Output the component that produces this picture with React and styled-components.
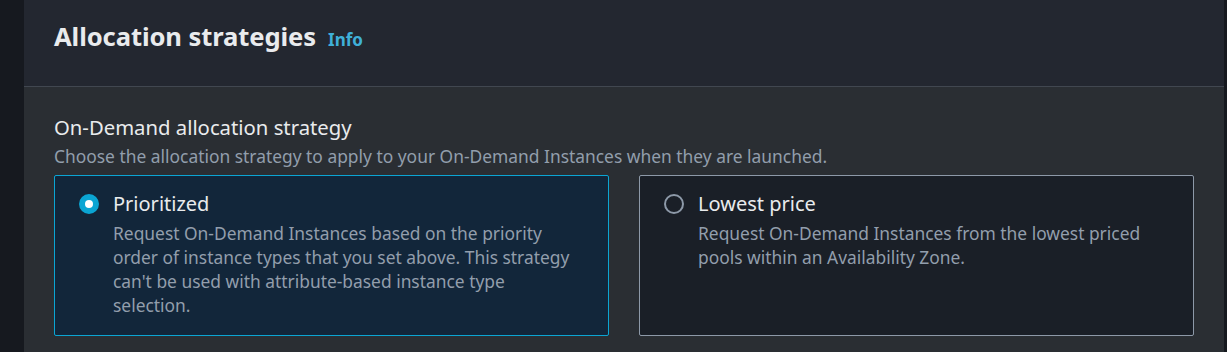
import React, { useState } from 'react'
import styled, { createGlobalStyle } from 'styled-components'

const Global = createGlobalStyle`
  html, body {
    margin: 0;
    background: #16191f;
  }
  body {
    font-family: "Noto Sans", "Open Sans", sans-serif;
    -webkit-font-smoothing: antialiased;
  }
`

const Page = styled.div`
  display: flex;
  min-height: 352px;
  background: #16191f;
  padding: 0 3px 0 24px;
  box-sizing: border-box;
`

const Container = styled.section`
  flex: 1;
  display: flex;
  flex-direction: column;
  background: #2a2e33;
`

const Header = styled.header`
  display: flex;
  align-items: baseline;
  gap: 12px;
  height: 87px;
  box-sizing: border-box;
  padding: 20px 30px 0;
  background: #232730;
  border-bottom: 1px solid #414750;

  h2 {
    margin: 0;
    font-size: 25.6px;
    line-height: 34px;
    font-weight: 700;
    color: #e9ebed;
    letter-spacing: -0.1px;
  }

  a {
    font-size: 17px;
    font-weight: 700;
    color: #3fb0d8;
    text-decoration: none;
  }
`

const Body = styled.div`
  padding: 27px 30px 17px;
`

const Label = styled.div`
  font-size: 20.3px;
  line-height: 26px;
  color: #e9ebed;
`

const Hint = styled.div`
  font-size: 17.4px;
  line-height: 22px;
  color: #929eac;
  margin-top: 5px;
`

const Tiles = styled.div`
  display: grid;
  grid-template-columns: 555px 555px;
  gap: 30px;
  margin-top: 8px;
`

const Tile = styled.label`
  display: flex;
  gap: 14px;
  padding: 16px 24px 18px;
  border-radius: 2px;
  cursor: pointer;
  background: ${p => (p.$selected ? '#12263a' : '#1a1f27')};
  border: 1px solid ${p => (p.$selected ? '#0ba5d3' : '#8d99a8')};
`

const Radio = styled.span`
  flex: none;
  width: 20px;
  height: 20px;
  margin-top: 2px;
  border-radius: 50%;
  box-sizing: border-box;
  display: flex;
  align-items: center;
  justify-content: center;
  background: ${p => (p.$checked ? '#0ba5d3' : 'transparent')};
  border: 2px solid ${p => (p.$checked ? '#0ba5d3' : '#8d99a8')};

  &::after {
    content: '';
    width: 8px;
    height: 8px;
    border-radius: 50%;
    background: #ffffff;
    display: ${p => (p.$checked ? 'block' : 'none')};
  }
`

const TileText = styled.div`
  display: flex;
  flex-direction: column;
`

const TileTitle = styled.span`
  font-size: 20px;
  line-height: 24px;
  color: #e9ebed;
`

const TileDesc = styled.span`
  margin-top: 5px;
  font-size: 17.4px;
  line-height: 24px;
  color: #929eac;
`

const options = [
  {
    id: 'prioritized',
    title: 'Prioritized',
    desc: "Request On-Demand Instances based on the priority order of instance types that you set above. This strategy can't be used with attribute-based instance type selection.",
  },
  {
    id: 'lowest',
    title: 'Lowest price',
    desc: 'Request On-Demand Instances from the lowest priced pools within an Availability Zone.',
  },
]

export default function App() {
  const [value, setValue] = useState('prioritized')
  return (
    <>
      <Global />
      <Page>
        <Container>
          <Header>
            <h2>Allocation strategies</h2>
            <a href="#">Info</a>
          </Header>
          <Body>
            <Label>On-Demand allocation strategy</Label>
            <Hint>Choose the allocation strategy to apply to your On-Demand Instances when they are launched.</Hint>
            <Tiles>
              {options.map(o => (
                <Tile key={o.id} $selected={value === o.id} onClick={() => setValue(o.id)}>
                  <Radio $checked={value === o.id} />
                  <TileText>
                    <TileTitle>{o.title}</TileTitle>
                    <TileDesc>{o.desc}</TileDesc>
                  </TileText>
                </Tile>
              ))}
            </Tiles>
          </Body>
        </Container>
      </Page>
    </>
  )
}
